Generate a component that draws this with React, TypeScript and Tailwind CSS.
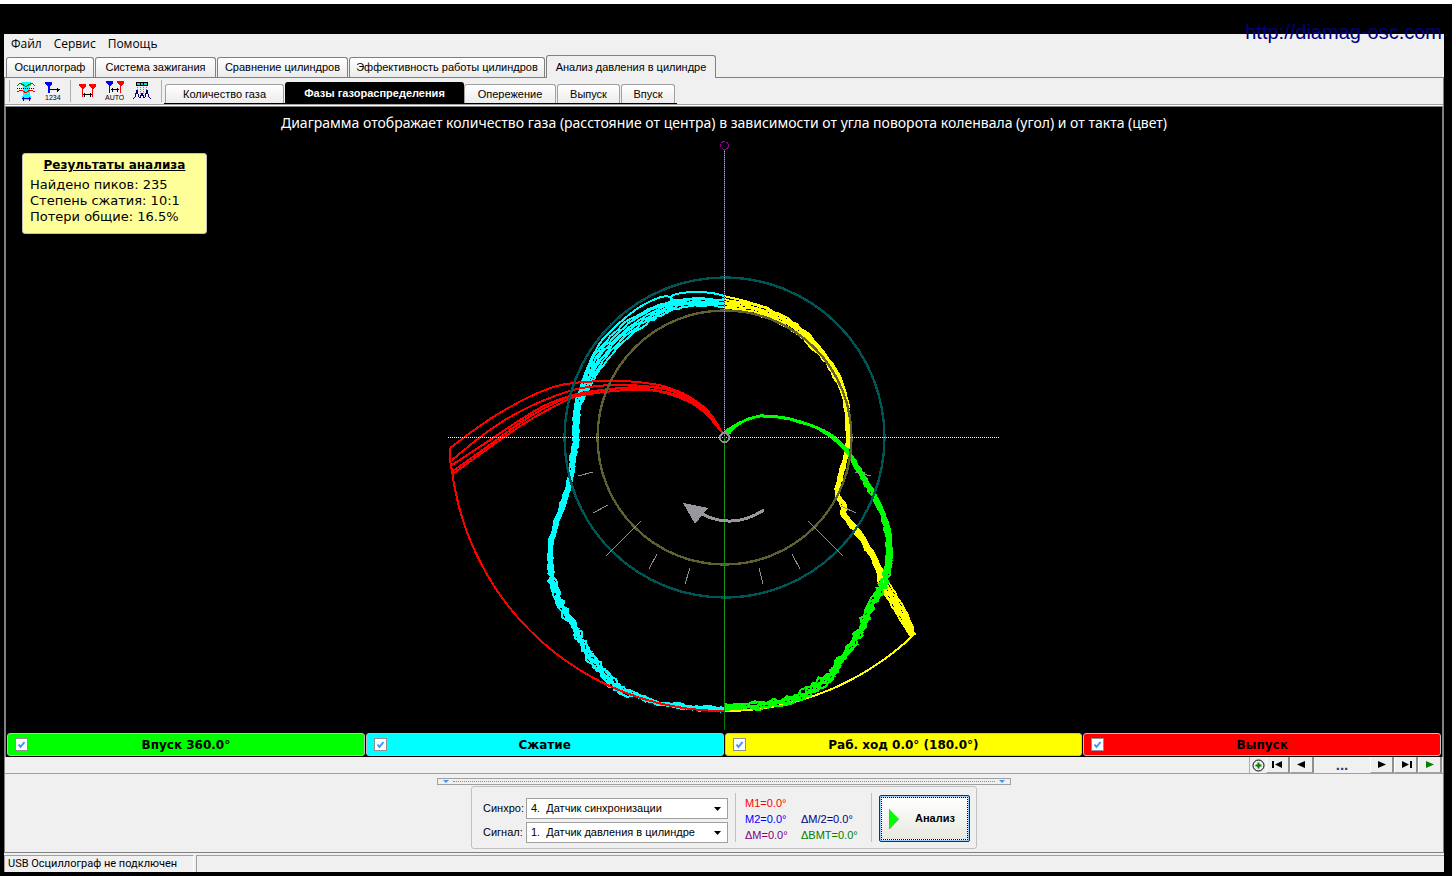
import React, { useState } from 'react'
import clsx from 'clsx'

type Point = [number, number]
type SpreadPoint = [number, number, number]

interface Stroke {
  label: string
  colorClass: string
}

const menuItems = ['Файл', 'Сервис', 'Помощь']

const mainTabs = [
  { label: 'Осциллограф', widthClass: 'w-[88px]' },
  { label: 'Система зажигания', widthClass: 'w-[121px]' },
  { label: 'Сравнение цилиндров', widthClass: 'w-[131px]' },
  { label: 'Эффективность работы цилиндров', widthClass: 'w-[196px]' },
  { label: 'Анализ давления в цилиндре', widthClass: 'w-[170px]' },
]

const subTabs = [
  { label: 'Количество газа', widthClass: 'w-[119px]' },
  { label: 'Фазы газораспределения', widthClass: 'w-[179px]' },
  { label: 'Опережение', widthClass: 'w-[92px]' },
  { label: 'Выпуск', widthClass: 'w-[63px]' },
  { label: 'Впуск', widthClass: 'w-[54px]' },
]

const strokes: Stroke[] = [
  { label: 'Впуск 360.0°', colorClass: 'bg-[#00ff00]' },
  { label: 'Сжатие', colorClass: 'bg-[#00ffff]' },
  { label: 'Раб. ход 0.0° (180.0°)', colorClass: 'bg-[#ffff00]' },
  { label: 'Выпуск', colorClass: 'bg-[#ff0000]' },
]

// Bundles: x, y of the middle line and the width of the bundle there
const compression: SpreadPoint[] = [
  [724, 303, 7], [695, 302, 7], [674, 305, 8], [655, 312, 11], [635, 324, 13], [615, 341, 13],
  [600, 359, 12], [590, 377, 9], [584, 390, 7], [578, 405, 6], [576, 422, 6], [576, 437, 5],
  [574, 452, 5], [572, 470, 4], [569, 484, 4], [564, 500, 4], [557, 521, 4], [551, 543, 4],
  [550, 562, 4], [552, 580, 5], [558, 597, 6], [564, 611, 5], [576, 630, 5], [584, 646, 5],
  [592, 659, 8], [604, 674, 5], [614, 684, 7], [622, 690, 5], [640, 697, 3], [657, 703, 2],
  [682, 706, 3], [700, 708, 3], [724, 709, 3],
]

const power: SpreadPoint[] = [
  [724, 304, 8], [745, 307, 8], [768, 314, 8], [790, 325, 8], [810, 341, 7], [825, 358, 5],
  [836, 375, 5], [844, 394, 4], [847, 413, 3], [848, 437, 3], [846, 455, 3], [841, 475, 4],
  [837, 492, 3], [844, 506, 4], [844, 515, 4], [855, 529, 4], [868, 548, 5], [878, 567, 5],
  [884, 584, 9], [896, 604, 9], [906, 621, 8], [913, 636, 4],
]

const intake: SpreadPoint[] = [
  [726, 433, 4], [730, 430, 3], [740, 423, 1], [752, 418, 1], [764, 416, 1], [785, 418, 1],
  [800, 422, 1], [815, 427, 1], [828, 434, 2], [840, 443, 3], [850, 455, 3], [857, 467, 4],
  [865, 480, 4], [872, 492, 4], [880, 508, 4], [886, 525, 4], [889, 545, 5], [889, 560, 6],
  [885, 578, 6], [880, 590, 5], [873, 602, 6], [866, 617, 5], [860, 631, 5], [852, 645, 5],
  [838, 664, 5], [830, 676, 5], [820, 684, 8], [808, 692, 7], [795, 698, 6], [775, 703, 5],
  [755, 706, 5], [724, 708, 5],
]

const exhaustLines: Point[][] = [
  [[723, 434], [708, 411], [688, 396], [669, 388], [653, 384], [620, 381], [573, 383], [540, 392], [493, 417], [450, 448]],
  [[723, 434], [707, 412], [688, 398], [668, 389], [627, 385], [598, 386], [573, 390], [540, 402], [510, 417], [483, 435], [452, 460]],
  [[723, 434], [706, 411], [687, 398], [668, 390], [640, 387], [587, 392], [550, 403], [520, 420], [490, 440], [452, 465]],
  [[723, 434], [706, 413], [687, 400], [665, 392], [627, 388], [583, 393], [557, 402], [526, 419], [495, 441], [453, 471]],
  [[723, 434], [706, 414], [687, 401], [657, 391], [627, 390], [583, 395], [563, 402], [530, 420], [500, 440], [453, 474]],
]

const compressionOuter: Point[] = [
  [724, 296], [712, 293], [692, 292], [673, 295], [672, 302], [677, 306], [667, 296], [645, 304], [625, 318],
  [604, 338], [596, 350], [589, 364], [582, 382], [578, 397],
]

const powerOuter: Point[] = [[724, 296], [745, 301], [768, 308], [781, 317], [800, 328], [814, 341], [824, 352]]

// Short marks between the two circles
const ticks = [
  [578, 476, 593, 472], [593, 513, 608, 505], [606, 556, 641, 521], [649, 569, 657, 554], [685, 584, 690, 568],
  [759, 568, 763, 584], [792, 554, 800, 569], [808, 521, 843, 556], [841, 506, 856, 513], [855, 472, 871, 476],
]

const spline = (a: number, b: number, c: number, d: number, t: number) =>
  0.5 * (2 * b + (c - a) * t + (2 * a - 5 * b + 4 * c - d) * t * t + (3 * b - a - 3 * c + d) * t * t * t)

const smooth = (points: number[][], steps: number) => {
  const result: number[][] = []
  for (let i = 0; i < points.length - 1; i++) {
    const p0 = points[Math.max(i - 1, 0)]
    const p3 = points[Math.min(i + 2, points.length - 1)]
    for (let s = 0; s < steps; s++) {
      result.push(points[i].map((v, k) => spline(p0[k], v, points[i + 1][k], p3[k], s / steps)))
    }
  }
  result.push(points[points.length - 1])
  return result
}

const noise = (n: number) => {
  const v = Math.sin(n * 12.9898) * 43758.5453
  return (v - Math.floor(v)) * 2 - 1
}

const toPath = (points: number[][]) => points.map(([x, y]) => `${x.toFixed(1)},${y.toFixed(1)}`).join(' ')

// Arc of the full cylinder, from the given angle down to the bottom
const fullArc = (from: number) =>
  Array.from({ length: 41 }, (_, i) => {
    const angle = ((from + ((90 - from) * i) / 40) * Math.PI) / 180
    return [724 + 274 * Math.cos(angle), 437 + 274 * Math.sin(angle)]
  })

// Several cycles of the same stroke, shifted along the normal; below roughY they get noisier
const bundle = (points: SpreadPoint[], count: number, roughY: number) => {
  const middle = smooth(points, 5)
  return Array.from({ length: count }, (_, k) => {
    const place = k / (count - 1) - 0.5
    return toPath(
      middle.map(([x, y, spread], i) => {
        const prev = middle[Math.max(i - 1, 0)]
        const next = middle[Math.min(i + 1, middle.length - 1)]
        const dx = next[0] - prev[0]
        const dy = next[1] - prev[1]
        const length = Math.hypot(dx, dy) || 1
        const jitter = y > roughY ? 2.4 : 0.9
        const shift = spread * place + noise(i * 7 + k * 131) * jitter * Math.min(spread / 4, 1)
        return [x - (dy / length) * shift, y + (dx / length) * shift]
      })
    )
  })
}

const Lines: React.FC<{ lines: string[]; color: string }> = ({ lines, color }) => (
  <g fill="none" stroke={color} strokeWidth="2">
    {lines.map((points, i) => (
      <polyline key={i} points={points} />
    ))}
  </g>
)

const PhaseDiagram: React.FC<{ visible: boolean[] }> = ({ visible }) => (
  <svg viewBox="444 140 560 592" className="block h-[592px] w-[560px] shrink-0" shapeRendering="crispEdges">
    {visible[1] && <Lines lines={[...bundle(compression, 6, 575), toPath(smooth(compressionOuter, 3))]} color="#00ffff" />}
    {visible[2] && <Lines lines={[...bundle(power, 6, 900), toPath(powerOuter), toPath([[915, 633], ...fullArc(46.9)])]} color="#ffff00" />}
    {visible[0] && <Lines lines={bundle(intake, 6, 575)} color="#00ff00" />}
    {visible[3] && (
      <Lines
        lines={[...exhaustLines.map((line) => toPath(smooth(line, 4))), toPath([[450, 448], [450, 460], ...fullArc(172.2)])]}
        color="#ff0000"
      />
    )}
    <circle cx="724.5" cy="437.5" r="160" fill="none" stroke="#005555" strokeWidth="2.4" />
    <circle cx="724.5" cy="437.5" r="127" fill="none" stroke="#606030" strokeWidth="2.4" />
    <g stroke="#909090" strokeWidth="1">
      {ticks.map(([x1, y1, x2, y2]) => (
        <line key={x1} x1={x1} y1={y1} x2={x2} y2={y2} />
      ))}
    </g>
    <line x1="448" y1="437.5" x2="999" y2="437.5" stroke="#ffffff" strokeDasharray="1 1" />
    <line x1="724.5" y1="149" x2="724.5" y2="437" stroke="#404058" />
    <line x1="724.5" y1="149" x2="724.5" y2="437" stroke="#b8b8b8" strokeDasharray="1 1" />
    <line x1="724.5" y1="437" x2="724.5" y2="730" stroke="#008000" />
    <line x1="724.5" y1="437" x2="724.5" y2="711" stroke="#806080" strokeDasharray="1 1" />
    <circle cx="724.5" cy="437.5" r="4.5" fill="none" stroke="#909090" strokeWidth="2" />
    <circle cx="724.5" cy="145.5" r="4" fill="none" stroke="#900090" strokeDasharray="4 1" />
    <path d="M702 514 Q733 530 764 510" fill="none" stroke="#98989c" strokeWidth="3" />
    <path d="M683 503 L708 508 L695 524 Z" fill="#98989c" />
  </svg>
)

const WaveIcon = () => (
  <svg width="18" height="20" viewBox="0 0 18 20" fill="none" shapeRendering="crispEdges">
    <path d="M5 1h9v4h-1v10h1v4H5v-4h1V5H5z" fill="#00ffff" />
    <path d="M0 4.500l3-2 3 1 3 2.500 3-2.500 3-1 3 2" stroke="#008000" />
    <path d="M0 7.500h18" stroke="#000" strokeDasharray="1 1" />
    <path d="M0 11l2-1 3-1 4 3 4-3 3 1 2 1" stroke="#ff0000" />
    <path d="M5 17.500h9M6.500 15.500v4M12.500 15.500v4" stroke="#0000c0" />
  </svg>
)

const MarkerIcon = () => (
  <svg width="18" height="20" viewBox="0 0 18 20" shapeRendering="crispEdges">
    <path d="M2 1h7v2L7 5v7H5V5L2 3z" fill="#0000ff" />
    <path d="M6 8.500h11M14.500 6.500v4M15.500 7.500v2" stroke="#000" />
    <text x="2" y="19" fontSize="7" fontFamily="Liberation Sans">1234</text>
  </svg>
)

const PairIcon = () => (
  <svg width="18" height="20" viewBox="0 0 18 20" shapeRendering="crispEdges">
    <path d="M1 3h7v2L5 8v8H4V8L1 5zM11 3h7v2l-3 3v8h-1V8l-3-3z" fill="#ff0000" />
    <path d="M5 13.500h9M6.500 11.500v4M12.500 11.500v4" stroke="#000" />
  </svg>
)

const AutoIcon = () => (
  <svg width="20" height="20" viewBox="0 0 20 20" shapeRendering="crispEdges">
    <path d="M2 0h7v2L6 5v7H5V5L2 2z" fill="#0000ff" />
    <path d="M13 0h7v2l-3 3v7h-1V5l-3-3z" fill="#ff0000" />
    <path d="M7 8.500h8M8.500 6.500v4M13.500 6.500v4" stroke="#000" />
    <text x="1" y="19" fontSize="7" fontFamily="Liberation Sans">AUTO</text>
  </svg>
)

const PeaksIcon = () => (
  <svg width="20" height="20" viewBox="0 0 20 20" fill="none" shapeRendering="crispEdges">
    <path d="M4 1h12v4H4z" fill="#000" />
    <path d="M5 2h3v2H5zM9 2h2v2H9zM12 2h3v2h-3z" fill="#00e0e0" />
    <path d="M5.500 6v8M8.500 6v11M11.500 6v11M14.500 6v8" stroke="#808080" strokeDasharray="1 1" />
    <path d="M1 18l2-2 2-7 2 7 1 1 2-5 2 5 1-1 2-7 2 7 2 2" stroke="#000080" />
  </svg>
)

const toolGroups = [
  [
    { label: 'Сигналы', icon: WaveIcon },
    { label: 'Маркер', icon: MarkerIcon },
  ],
  [
    { label: 'Два маркера', icon: PairIcon },
    { label: 'Авто', icon: AutoIcon },
    { label: 'Пики', icon: PeaksIcon },
  ],
]

const navButtons = [
  { label: 'В начало', path: 'M0 2h2v7H0zM10 2v7L3 5.500z', color: '#000000' },
  { label: 'Назад', path: 'M9 2v7L1 5.500z', color: '#000000' },
  { label: 'Вперёд', path: 'M2 2v7l8-3.500z', color: '#000000' },
  { label: 'В конец', path: 'M2 2v7l7-3.500zM10 2h2v7h-2z', color: '#000000' },
  { label: 'Пуск', path: 'M2 2v7l8-3.500z', color: '#008000' },
]

const NavButton: React.FC<{ item: (typeof navButtons)[number] }> = ({ item }) => (
  <button
    aria-label={item.label}
    className="flex w-6 items-center justify-center border-b border-l border-r-2 border-b-[#a0a0a0] border-l-white border-r-[#909090]"
  >
    <svg width="12" height="11" viewBox="0 0 12 11">
      <path d={item.path} fill={item.color} />
    </svg>
  </button>
)

interface ChannelSelectProps {
  id: string
  label: string
  options: string[]
}

const ChannelSelect: React.FC<ChannelSelectProps> = ({ id, label, options }) => (
  <div className="flex items-center">
    <label htmlFor={id} className="w-[43px] pt-px text-[11px]">
      {label}
    </label>
    <div className="relative">
      <select
        id={id}
        className="block h-[21px] w-[202px] appearance-none border border-[#a0a0a0] bg-white px-1 text-[11px] leading-4 text-black outline-none"
      >
        {options.map((option) => (
          <option key={option}>{option}</option>
        ))}
      </select>
      <svg className="pointer-events-none absolute top-[9px] right-[7px]" width="7" height="5" viewBox="0 0 7 5">
        <path d="M0 0h7L3.500 4z" fill="#000" />
      </svg>
    </div>
  </div>
)

const App: React.FC = () => {
  const [mainTab, setMainTab] = useState(4)
  const [subTab, setSubTab] = useState(1)
  const [visible, setVisible] = useState([true, true, true, true])

  const toggleStroke = (index: number) => {
    setVisible(visible.map((v, i) => (i === index ? !v : v)))
  }

  return (
    <div className="min-h-screen bg-white pt-1 pr-1 font-['Liberation_Sans',sans-serif] text-[11px] text-black">
      <div className="relative flex min-h-[calc(100vh-4px)] flex-col bg-black pt-[30px] pr-2 pb-1 pl-1">
        <a
          href="http://diamag-osc.com"
          className="absolute top-4 right-[10px] text-[20px] leading-6 text-[#000080]"
        >
          http://diamag-osc.com
        </a>

        <div className="flex flex-1 flex-col bg-[#f0f0f0]">
          {/* Menu */}
          <nav className="flex h-[21px] items-center gap-3 pb-[2px] pl-[7px] font-['Open_Sans',sans-serif] text-[12px] leading-4">
            {menuItems.map((item) => (
              <button key={item}>{item}</button>
            ))}
          </nav>

          {/* Main tabs */}
          <div className="flex h-[22px] items-end pl-[2px]">
            {mainTabs.map((tab, i) => (
              <button
                key={tab.label}
                onClick={() => setMainTab(i)}
                className={clsx(
                  'shrink-0 rounded-t-[3px] border border-b-0 border-[#808080] whitespace-nowrap',
                  tab.widthClass,
                  i === mainTab ? 'relative -mb-px h-[23px] bg-[#f0f0f0]' : 'mr-px h-5 bg-linear-to-b from-white to-[#ececec]'
                )}
              >
                {tab.label}
              </button>
            ))}
          </div>

          <div className="flex flex-1 flex-col border border-[#808080]">
            {/* Toolbar and inner tabs */}
            <div className="flex h-[26px] items-center pl-1">
              {toolGroups.map((group, g) => (
                <div key={g} className="flex h-[22px] items-center gap-2 border-l border-[#b0b0b0] pr-[9px] pl-[7px]">
                  {group.map(({ label, icon: Icon }) => (
                    <button key={label} aria-label={label}>
                      <Icon />
                    </button>
                  ))}
                </div>
              ))}
              <div className="h-[22px] border-l border-[#b0b0b0]" />
              <div className="flex h-full items-end pl-[2px]">
                <div className="flex items-end border-b border-black px-px">
                  {subTabs.map((tab, i) => (
                    <button
                      key={tab.label}
                      onClick={() => setSubTab(i)}
                      className={clsx(
                        'shrink-0 rounded-t-[3px] border border-b-0 whitespace-nowrap',
                        tab.widthClass,
                        i === subTab
                          ? 'h-[21px] border-black bg-black font-bold text-white'
                          : 'mr-px h-[19px] border-[#a0a0a0] bg-linear-to-b from-white to-[#ececec]'
                      )}
                    >
                      {tab.label}
                    </button>
                  ))}
                </div>
              </div>
            </div>

            <div className="border-t border-b border-[#a0a0a0]">
              <div className="border-t border-white" />
              {/* Canvas */}
              <div className="relative flex flex-col items-center overflow-hidden border-x border-t border-[#808080] bg-black font-['DejaVu_Sans',sans-serif] text-[13px] text-white">
                <p className="h-[33px] pt-[7px] font-['Noto_Sans',sans-serif] text-[14px] leading-[18px]">
                  Диаграмма отображает количество газа (расстояние от центра) в зависимости от угла поворота коленвала (угол) и от такта (цвет)
                </p>
                <PhaseDiagram visible={visible} />

                <section className="absolute top-[46px] left-4 h-[81px] w-[185px] rounded-[3px] border border-[#c0c0c0] bg-[#ffff99] px-[7px] pt-[3px] leading-4 text-black">
                  <h2 className="mb-1 text-center text-[12px] font-bold underline">Результаты анализа</h2>
                  <p>Найдено пиков: 235</p>
                  <p>Степень сжатия: 10:1</p>
                  <p>Потери общие: 16.5%</p>
                </section>

                <div className="grid w-full grid-cols-4 gap-px p-px">
                  {strokes.map((stroke, i) => (
                    <label
                      key={stroke.label}
                      className={clsx(
                        'relative flex h-[23px] items-center justify-center rounded-[3px] border border-[#c0c0c0] text-[12px] leading-4 font-bold text-black',
                        stroke.colorClass
                      )}
                    >
                      <span className="absolute left-[7px] size-[13px]">
                        <input
                          type="checkbox"
                          checked={visible[i]}
                          onChange={() => toggleStroke(i)}
                          className="peer block size-[13px] appearance-none border border-[#909090] bg-white"
                        />
                        <svg className="pointer-events-none absolute inset-0 hidden peer-checked:block" width="13" height="13" viewBox="0 0 13 13">
                          <path d="M3.500 6.500l2 2.500 4-5" fill="none" stroke="#3399ff" strokeWidth="2" />
                        </svg>
                      </span>
                      {stroke.label}
                    </label>
                  ))}
                </div>
              </div>

              {/* Navigation */}
              <div className="flex h-4 justify-end pr-px">
                <button aria-label="Увеличить" className="flex w-[17px] items-center justify-center border-l border-[#a0b0c0]">
                  <svg width="13" height="13" viewBox="0 0 13 13" fill="none">
                    <circle cx="6.500" cy="6.500" r="5.500" stroke="#000" />
                    <path d="M6.500 3.500v6M3.500 6.500h6" stroke="#008000" strokeWidth="2" />
                  </svg>
                </button>
                {navButtons.slice(0, 2).map((item) => (
                  <NavButton key={item.label} item={item} />
                ))}
                <button className="w-14 text-center text-[15px] leading-4 font-bold text-[#204080]">...</button>
                {navButtons.slice(2).map((item) => (
                  <NavButton key={item.label} item={item} />
                ))}
              </div>
            </div>

            {/* Splitter */}
            <div className="flex flex-1 flex-col items-center pt-1">
              <div className="flex h-[7px] w-[574px] items-center gap-1 border border-[#a0a0a0] px-[5px]">
                <svg width="6" height="3" viewBox="0 0 6 3">
                  <path d="M0 0h6L3 3z" fill="#3399ff" />
                </svg>
                <div className="flex-1 border-t border-dotted border-[#3399ff]" />
                <svg width="6" height="3" viewBox="0 0 6 3">
                  <path d="M0 0h6L3 3z" fill="#3399ff" />
                </svg>
              </div>

              {/* Channels and markers */}
              <div className="mt-px flex h-[63px] w-[506px] items-center rounded-[3px] border border-[#c0c0c0] pl-[11px]">
                <div className="flex flex-col gap-[3px] pt-[5px]">
                  <ChannelSelect
                    id="sync"
                    label="Синхро:"
                    options={['4.\u00a0\u00a0Датчик синхронизации', '1.\u00a0\u00a0Датчик давления в цилиндре']}
                  />
                  <ChannelSelect
                    id="signal"
                    label="Сигнал:"
                    options={['1.\u00a0\u00a0Датчик давления в цилиндре', '4.\u00a0\u00a0Датчик синхронизации']}
                  />
                </div>
                <div className="ml-[7px] grid h-[49px] w-[137px] grid-cols-[56px_1fr] content-start border-x border-[#c0c0c0] pt-[2px] pl-[9px] leading-4">
                  <span className="text-[#ff0000]">M1=0.0°</span>
                  <span />
                  <span className="text-[#0000ff]">M2=0.0°</span>
                  <span className="text-[#000080]">ΔM/2=0.0°</span>
                  <span className="text-[#800080]">ΔM=0.0°</span>
                  <span className="text-[#008000]">ΔBMT=0.0°</span>
                </div>
                <button className="mt-[2px] ml-[7px] h-[47px] w-[91px] rounded-[2px] border border-[#003c74] bg-[#a0ccf8] p-px">
                  <span className="flex h-full items-center border border-dotted border-black bg-linear-to-b from-white to-[#e8e8e0] pl-[7px] font-bold">
                    <svg width="10" height="20" viewBox="0 0 10 20">
                      <path d="M0 0l10 10L0 20z" fill="#00ff00" />
                      <path d="M0.500 0v20l9-10" fill="none" stroke="#909090" />
                    </svg>
                    <span className="ml-4">Анализ</span>
                  </span>
                </button>
              </div>
            </div>
          </div>

          {/* Status bar */}
          <footer className="mt-[2px] flex h-[17px] gap-[2px]">
            <div className="w-[190px] border-t border-r border-l border-t-[#a0a0a0] border-r-white border-l-[#a0a0a0] pl-[3px] font-['Roboto',sans-serif] leading-4">
              USB Осциллограф не подключен
            </div>
            <div className="flex-1 border-t border-l border-[#a0a0a0]" />
          </footer>
        </div>
      </div>
    </div>
  )
}

export default App
